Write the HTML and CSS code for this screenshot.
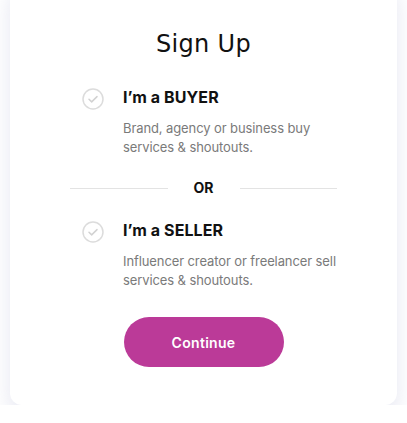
FILE: index.html
```html
<!DOCTYPE html>
<html lang="en">
<head>
    <meta charset="UTF-8">
    <meta name="viewport" content="width=device-width, initial-scale=1.0">
    <title>Sign Up</title>
    <link rel="stylesheet" href="styles.css">
</head>
<body>
    <div class="card">
        <h1>Sign Up</h1>

        <div class="choices">
            <label class="choice">
                <svg class="check" width="22" height="22" viewBox="0 0 22 22">
                    <circle cx="11" cy="11" r="10" fill="none" stroke="#dcdcdc" stroke-width="1.5"/>
                    <path d="M7 11.3l2.7 2.6 5.3-5.3" fill="none" stroke="#d2d2d2" stroke-width="1.5" stroke-linecap="round" stroke-linejoin="round"/>
                </svg>
                <div class="choice-text">
                    <h2>I’m a BUYER</h2>
                    <p>Brand, agency or business buy services &amp; shoutouts.</p>
                </div>
            </label>

            <div class="divider"><span>OR</span></div>

            <label class="choice">
                <svg class="check" width="22" height="22" viewBox="0 0 22 22">
                    <circle cx="11" cy="11" r="10" fill="none" stroke="#dcdcdc" stroke-width="1.5"/>
                    <path d="M7 11.3l2.7 2.6 5.3-5.3" fill="none" stroke="#d2d2d2" stroke-width="1.5" stroke-linecap="round" stroke-linejoin="round"/>
                </svg>
                <div class="choice-text">
                    <h2>I’m a SELLER</h2>
                    <p>Influencer creator or freelancer sell services &amp; shoutouts.</p>
                </div>
            </label>
        </div>

        <button class="continue" type="button">Continue</button>
    </div>
</body>
</html>
```

FILE: styles.css
```css
/* Page */
body {
    margin: 0;
    background-color: #fff;
    font-family: 'Inter', sans-serif;
    color: #111;
}

/* Card */
.card {
    margin: -20px 10px 0;
    padding: 48px 0 38px;
    background-color: #fff;
    border-radius: 12px;
    box-shadow: 0 10px 22px rgba(180, 182, 215, 0.35);
    display: flex;
    flex-direction: column;
    align-items: center;
}

h1 {
    margin: 0;
    font-family: 'DejaVu Sans', sans-serif;
    font-weight: 400;
    font-size: 24px;
    line-height: 32px;
    letter-spacing: 0.3px;
    color: #111;
}

/* Buyer / seller choices */
.choices {
    width: 267px;
    margin-top: 24px;
}

.choice {
    display: flex;
    gap: 19px;
    padding-left: 12px;
    cursor: pointer;
}

.check {
    flex-shrink: 0;
    margin-top: 4px;
}

.choice-text {
    margin-right: -8px;
}

.choice-text h2 {
    margin: 0;
    font-size: 16px;
    font-weight: 700;
    line-height: 26px;
    letter-spacing: 0.1px;
    color: #111;
}

.choice-text p {
    margin: 9px 0 0;
    font-size: 13px;
    line-height: 19px;
    letter-spacing: -0.1px;
    color: #7a7a7a;
}

/* OR divider */
.divider {
    display: flex;
    align-items: center;
    gap: 26px;
    margin: 22px 0 20px;
    font-size: 14px;
    font-weight: 700;
    line-height: 18px;
}

.divider::before,
.divider::after {
    content: "";
    flex: 1;
    height: 1px;
    background-color: #e3e3e3;
}

/* Button */
.continue {
    margin-top: 27px;
    width: 160px;
    height: 50px;
    border: none;
    border-radius: 25px;
    background-color: #bb3a98;
    color: #fff;
    font-family: 'Inter', sans-serif;
    font-size: 14px;
    font-weight: 600;
    letter-spacing: 0.3px;
    cursor: pointer;
}
```
